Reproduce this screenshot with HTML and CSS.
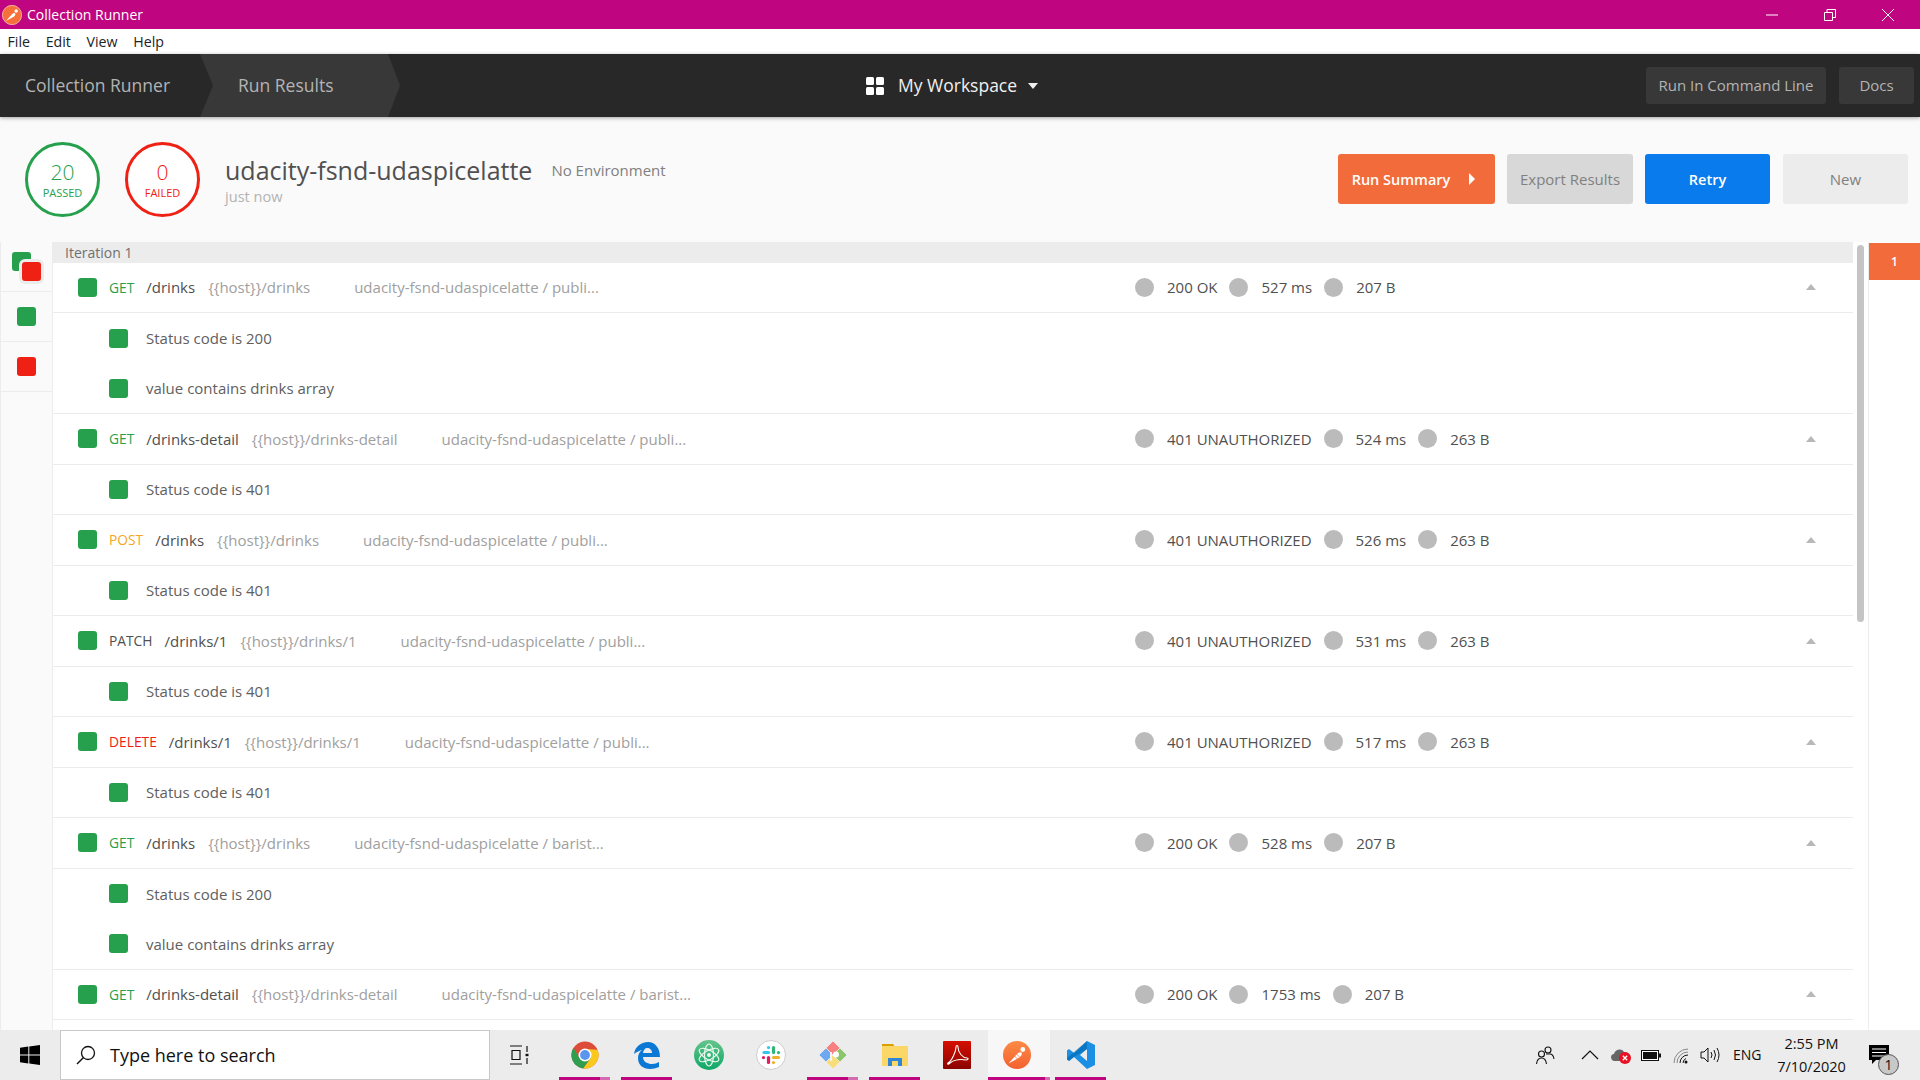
FILE: index.html
```html
<!DOCTYPE html>
<html lang="en">
<head>
<meta charset="utf-8">
<title>Collection Runner</title>
<link rel="stylesheet" href="styles.css">
</head>
<body>
<div class="app">
  <div class="titlebar">
    <div class="title-left">
      <svg class="pm-small" viewBox="0 0 28 28"><circle cx="14" cy="14" r="13.500" fill="#f7703a" stroke="#ffd9c4"/><path d="M5.500 22.500L14 13Q16 10.500 18.500 11.500Q19.500 14 17 16Z" fill="#fff"/><circle cx="19.800" cy="8.500" r="2.400" fill="#fff"/></svg>
      <span>Collection Runner</span>
    </div>
    <div class="win-controls">
      <svg class="win-min" viewBox="0 0 12 12"><path d="M0 6H12" stroke="#fff"/></svg>
      <svg class="win-max" viewBox="0 0 12 12"><path d="M.5 3.5h8v8h-8zM3 3.5V.5h8.500v8H8.500" fill="none" stroke="#fff"/></svg>
      <svg class="win-close" viewBox="0 0 12 12"><path d="M0 0L12 12M12 0L0 12" stroke="#fff"/></svg>
    </div>
  </div>
  <div class="menubar"><span>File</span><span>Edit</span><span>View</span><span>Help</span></div>
  <header class="topbar">
    <div class="crumbs">
      <div class="crumb">Collection Runner</div>
      <div class="crumb crumb-active">Run Results</div>
    </div>
    <div class="workspace">
      <svg class="ws-icon" viewBox="0 0 18 18"><rect width="8" height="8" rx="1.500" fill="#fff"/><rect x="10" width="8" height="8" rx="1.500" fill="#fff"/><rect y="10" width="8" height="8" rx="1.500" fill="#fff"/><rect x="10" y="10" width="8" height="8" rx="1.500" fill="#fff"/></svg>
      <span class="ws-label">My Workspace</span>
      <i class="ws-caret"></i>
    </div>
    <div class="top-actions">
      <button class="dark-btn btn-cli">Run In Command Line</button>
      <button class="dark-btn btn-docs">Docs</button>
    </div>
  </header>
  <section class="summary">
    <div class="ring ring-pass"><b>20</b><small>PASSED</small></div>
    <div class="ring ring-fail"><b>0</b><small>FAILED</small></div>
    <div class="run-info">
      <div class="run-line"><span class="run-name">udacity-fsnd-udaspicelatte</span><span class="run-env">No Environment</span></div>
      <div class="run-time">just now</div>
    </div>
    <div class="run-actions">
      <button class="act act-summary">Run Summary<i class="act-caret"></i></button>
      <button class="act act-export">Export Results</button>
      <button class="act act-retry">Retry</button>
      <button class="act act-new">New</button>
    </div>
  </section>
  <main class="body">
    <aside class="filters">
      <div class="filter"><span class="stack"><i class="sq sq-g stack-g"></i><i class="sq sq-r stack-r"></i></span></div>
      <div class="filter"><i class="sq sq-g"></i></div>
      <div class="filter"><i class="sq sq-r"></i></div>
    </aside>
    <div class="results">
      <div class="iter">Iteration 1</div>

      <div class="row req"><i class="sq sq-g"></i><span class="m m-get">GET</span><span class="path">/drinks</span><span class="url">{{host}}/drinks</span><span class="coll">udacity-fsnd-udaspicelatte / publi...</span>
        <div class="meta"><i class="dot"></i><span>200 OK</span><i class="dot"></i><span>527 ms</span><i class="dot"></i><span>207 B</span></div><i class="up"></i></div>
      <div class="row sub"><i class="sq sq-g"></i><span>Status code is 200</span></div>
      <div class="row sub sub-end"><i class="sq sq-g"></i><span>value contains drinks array</span></div>

      <div class="row req"><i class="sq sq-g"></i><span class="m m-get">GET</span><span class="path">/drinks-detail</span><span class="url">{{host}}/drinks-detail</span><span class="coll">udacity-fsnd-udaspicelatte / publi...</span>
        <div class="meta"><i class="dot"></i><span>401 UNAUTHORIZED</span><i class="dot"></i><span>524 ms</span><i class="dot"></i><span>263 B</span></div><i class="up"></i></div>
      <div class="row sub sub-end"><i class="sq sq-g"></i><span>Status code is 401</span></div>

      <div class="row req"><i class="sq sq-g"></i><span class="m m-post">POST</span><span class="path">/drinks</span><span class="url">{{host}}/drinks</span><span class="coll">udacity-fsnd-udaspicelatte / publi...</span>
        <div class="meta"><i class="dot"></i><span>401 UNAUTHORIZED</span><i class="dot"></i><span>526 ms</span><i class="dot"></i><span>263 B</span></div><i class="up"></i></div>
      <div class="row sub sub-end"><i class="sq sq-g"></i><span>Status code is 401</span></div>

      <div class="row req"><i class="sq sq-g"></i><span class="m m-patch">PATCH</span><span class="path">/drinks/1</span><span class="url">{{host}}/drinks/1</span><span class="coll">udacity-fsnd-udaspicelatte / publi...</span>
        <div class="meta"><i class="dot"></i><span>401 UNAUTHORIZED</span><i class="dot"></i><span>531 ms</span><i class="dot"></i><span>263 B</span></div><i class="up"></i></div>
      <div class="row sub sub-end"><i class="sq sq-g"></i><span>Status code is 401</span></div>

      <div class="row req"><i class="sq sq-g"></i><span class="m m-delete">DELETE</span><span class="path">/drinks/1</span><span class="url">{{host}}/drinks/1</span><span class="coll">udacity-fsnd-udaspicelatte / publi...</span>
        <div class="meta"><i class="dot"></i><span>401 UNAUTHORIZED</span><i class="dot"></i><span>517 ms</span><i class="dot"></i><span>263 B</span></div><i class="up"></i></div>
      <div class="row sub sub-end"><i class="sq sq-g"></i><span>Status code is 401</span></div>

      <div class="row req"><i class="sq sq-g"></i><span class="m m-get">GET</span><span class="path">/drinks</span><span class="url">{{host}}/drinks</span><span class="coll">udacity-fsnd-udaspicelatte / barist...</span>
        <div class="meta"><i class="dot"></i><span>200 OK</span><i class="dot"></i><span>528 ms</span><i class="dot"></i><span>207 B</span></div><i class="up"></i></div>
      <div class="row sub"><i class="sq sq-g"></i><span>Status code is 200</span></div>
      <div class="row sub sub-end"><i class="sq sq-g"></i><span>value contains drinks array</span></div>

      <div class="row req"><i class="sq sq-g"></i><span class="m m-get">GET</span><span class="path">/drinks-detail</span><span class="url">{{host}}/drinks-detail</span><span class="coll">udacity-fsnd-udaspicelatte / barist...</span>
        <div class="meta"><i class="dot"></i><span>200 OK</span><i class="dot"></i><span>1753 ms</span><i class="dot"></i><span>207 B</span></div><i class="up"></i></div>
    </div>
    <div class="scroll"><div class="thumb"></div></div>
    <aside class="iters"><div class="iter-tab">1</div></aside>
  </main>
  <footer class="taskbar">
    <svg class="tb-win" viewBox="0 0 20 20"><path d="M0 2.800L8.300 1.600V9.500H0zM9.300 1.500L20 0V9.500H9.300zM0 10.500H8.300V18.400L0 17.200zM9.300 10.500H20V20L9.300 18.500z" fill="#000"/></svg>
    <div class="search">
      <svg class="search-ico" viewBox="0 0 20 20"><circle cx="12" cy="8" r="6.500" fill="none" stroke="#111" stroke-width="1.300"/><path d="M7.500 12.500L1 19" stroke="#111" stroke-width="1.500"/></svg>
      <span>Type here to search</span>
    </div>
    <svg class="taskview" viewBox="0 0 20 20"><path d="M1 1H13M1 19H13M3 5.500H11V14.500H3Z" fill="none" stroke="#111" stroke-width="1.200"/><path d="M18 1V7M18 13V19" stroke="#111" stroke-width="1.200"/><rect x="16.500" y="8.800" width="3" height="2.400" fill="#111"/></svg>
    <div class="apps">
      <div class="app-i on split"><svg viewBox="0 0 28 28"><circle cx="14" cy="14" r="13.500" fill="#dd4b39"/><path d="M26.500 8.800L14 8L19.500 17L12 27.400A13.500 13.500 0 0 0 26.500 8.800Z" fill="#fbc91d"/><path d="M2.500 6.800L8.500 17L19.500 17L12 27.400A13.500 13.500 0 0 1 2.500 6.800Z" fill="#2f9e4f"/><circle cx="14" cy="14" r="6.500" fill="#fff"/><circle cx="14" cy="14" r="4.900" fill="#5a95f0"/></svg></div>
      <div class="app-i on"><svg viewBox="0 0 28 28"><path fill-rule="evenodd" d="M1 13C2 5 9 1 15 1C22 1 27 7 27 16H10C10 21 15 23 19 23C22 23 24 22 26 21V26C23 27 20 28 17 28C10 28 5 24 5 17C5 14 6 11 9 9C6 10 3 11 1 13ZM10 12H19C19 9 17 7 14 7C12 7 10.500 9 10 12Z" fill="#0a78d4"/></svg></div>
      <div class="app-i app-lg"><svg viewBox="0 0 30 30"><defs><linearGradient id="atomg" x1="0" y1="0" x2="0" y2="1"><stop offset="0" stop-color="#66c48b"/><stop offset="1" stop-color="#0ca866"/></linearGradient></defs><circle cx="15" cy="15" r="15" fill="url(#atomg)"/><g fill="none" stroke="#e9f7ef" stroke-width="1.200"><ellipse cx="15" cy="15" rx="11" ry="4.500" transform="rotate(30 15 15)"/><ellipse cx="15" cy="15" rx="11" ry="4.500" transform="rotate(-30 15 15)"/><ellipse cx="15" cy="15" rx="11" ry="4.500" transform="rotate(90 15 15)"/></g><circle cx="15" cy="15" r="2" fill="#e9f7ef"/></svg></div>
      <div class="app-i app-lg"><svg viewBox="0 0 30 30"><circle cx="15" cy="15" r="14.500" fill="#fff" stroke="#ccc"/><g stroke-width="3.200" stroke-linecap="round" fill="none"><path d="M8 12.500H12.500" stroke="#36c5f0"/><path d="M12.500 7.500V7.600" stroke="#36c5f0"/><path d="M17.500 7.500V12.500" stroke="#2eb67d"/><path d="M22.500 12.500V12.600" stroke="#2eb67d"/><path d="M17.500 17.500H22.500" stroke="#ecb22e"/><path d="M17.500 22.500V22.600" stroke="#ecb22e"/><path d="M12.500 17.500V22.500" stroke="#e01e5a"/><path d="M7.500 17.500V17.600" stroke="#e01e5a"/></g></svg></div>
      <div class="app-i app-lg on split"><svg viewBox="0 0 30 30"><g stroke="#ececec" stroke-width=".8"><path d="M8 8L15 15L8 22L1 15Z" fill="#6ea8f0"/><path d="M15 15L22 22L15 29L8 22Z" fill="#f9dd7a"/><path d="M22 8L29 15L22 22L15 15Z" fill="#8bc66a"/><path d="M15 1L22 8L15 15L8 8Z" fill="#f98080"/></g><circle cx="18" cy="14.500" r="3" fill="#fff"/><path d="M13 12V21" stroke="#f4f4f4" stroke-width="2"/></svg></div>
      <div class="app-i on"><svg viewBox="0 0 28 24"><path d="M1 1H12L14 4H1Z" fill="#d9a000"/><path d="M1 3H27V23H1Z" fill="#fbd768"/><path d="M7 15H21V23H17V18H11V23H7Z" fill="#2f86d6"/></svg></div>
      <div class="app-i"><svg viewBox="0 0 28 28"><defs><linearGradient id="acrog" x1="0" y1="0" x2="0" y2="1"><stop offset="0" stop-color="#d50f00"/><stop offset="1" stop-color="#8a0400"/></linearGradient></defs><rect width="28" height="28" rx="1" fill="url(#acrog)"/><path d="M5 22C9 20 13 10 13 6C13 4 15 4 15 6C15 12 20 17 24 17C26 17 25 19 23 19C17 18 11 19 7 22C5 24 4 23 5 22Z" fill="none" stroke="#fff" stroke-width="1.100"/></svg></div>
      <div class="app-i on active"><svg viewBox="0 0 28 28"><defs><linearGradient id="pmg" x1="0" y1="0" x2="0" y2="1"><stop offset="0" stop-color="#fb8b46"/><stop offset="1" stop-color="#f4612e"/></linearGradient></defs><circle cx="14" cy="14" r="14" fill="url(#pmg)"/><path d="M5.500 22.500L14 13Q16 10.500 18.500 11.500Q19.500 14 17 16L12 19Z" fill="#fff"/><path d="M11.500 15L14.500 18M13.500 13L16.500 16" stroke="#f7703a" stroke-width=".8"/><circle cx="19.800" cy="8.500" r="2.400" fill="#fff"/></svg></div>
      <div class="app-i app-lg on"><svg viewBox="0 0 30 30"><path d="M21 1L29 5V25L21 29L8 17L3 21L1 19.500V10.500L3 9L8 13ZM21 9L14 15L21 21Z" fill="#1a8fe3"/><path d="M21 1V9L8 17L3 21L1 19.500V18L21 1Z" fill="#0065a9" fill-opacity=".55"/></svg></div>
    </div>
    <div class="tray">
      <svg class="t-people" viewBox="0 0 20 20"><g fill="none" stroke="#111" stroke-width="1.100"><circle cx="13" cy="5" r="3"/><circle cx="6.500" cy="9" r="3"/><path d="M1.500 19C2 15 4 13 6.500 13S11 15 11.500 19M11 9H15C17 9 18.500 11 19 14"/></g></svg>
      <svg class="t-chev" viewBox="0 0 18 10"><path d="M1 9L9 1L17 9" fill="none" stroke="#111" stroke-width="1.200"/></svg>
      <svg class="t-cloud" viewBox="0 0 22 18"><path d="M4 15C0 14 0 8 4 8C5 3 12 2 14 6C18 6 20 9 20 12V15Z" fill="#666"/><circle cx="15" cy="12" r="6" fill="#e81123"/><path d="M12.800 9.800L17.200 14.200M17.200 9.800L12.800 14.200" stroke="#fff" stroke-width="1.300"/></svg>
      <svg class="t-batt" viewBox="0 0 20 11"><rect x=".5" y=".5" width="17" height="10" fill="#fff" stroke="#111"/><rect x="2" y="2" width="14" height="7" fill="#111"/><rect x="18" y="3.500" width="2" height="4" fill="#111"/></svg>
      <svg class="t-wifi" viewBox="0 0 16 16"><g fill="none" stroke="#888" stroke-width="1"><path d="M1 15A14 14 0 0 1 15 1"/><path d="M4 15A11 11 0 0 1 15 4"/></g><path d="M7 15A8 8 0 0 1 15 7" fill="none" stroke="#111"/><path d="M10 15A5 5 0 0 1 13 10.500" fill="none" stroke="#111"/><circle cx="13" cy="14" r="1.500" fill="#111"/></svg>
      <svg class="t-vol" viewBox="0 0 20 16"><path d="M1 5H4L8 1V15L4 11H1Z" fill="none" stroke="#111"/><path d="M11 5Q13 8 11 11M14 3Q17 8 14 13M17 1Q21 8 17 15" fill="none" stroke="#111"/></svg>
      <span class="t-lang">ENG</span>
      <div class="clock"><span>2:55 PM</span><span>7/10/2020</span></div>
      <div class="notif">
        <svg class="notif-ico" viewBox="0 0 20 19"><path d="M0 0H20V15H7L3 19V15H0Z" fill="#000"/><path d="M3 4H17M3 7.500H17M3 11H17" stroke="#fff"/></svg>
        <span class="badge">1</span>
      </div>
    </div>
  </footer>
</div>
</body>
</html>
```
FILE: styles.css
```css
* { box-sizing: border-box; }
html, body { margin: 0; height: 100%; overflow: hidden; }
body { font-family: "Open Sans", "Noto Sans", sans-serif; color: #505050; background: #fff; }
i { display: block; font-style: normal; }
button { font-family: inherit; border: 0; padding: 0; }

.app { width: 1920px; height: 1080px; display: flex; flex-direction: column; }

/* title bar */
.titlebar { height: 29px; flex: none; background: #bf0680; color: #fff; display: flex; justify-content: space-between; align-items: center; font-size: 14px; }
.title-left { display: flex; align-items: center; padding-left: 2px; gap: 5px; }
.pm-small { width: 20px; height: 20px; }
.win-controls { display: flex; align-items: center; padding-right: 26px; gap: 46px; }
.win-min, .win-max, .win-close { width: 12px; height: 12px; }

/* menu */
.menubar { height: 25px; flex: none; background: #fff; color: #222; font-size: 14.200px; display: flex; align-items: center; padding-left: 7.500px; gap: 15.700px; }

/* dark top bar */
.topbar { height: 63px; flex: none; background: #282828; display: flex; align-items: center; position: relative; z-index: 2; box-shadow: 0 1px 4px rgba(0,0,0,.35); }
.crumbs { display: flex; height: 100%; width: 400px; flex: none; }
.crumb { font-size: 17.500px; color: #b3b3b3; display: flex; align-items: center; padding: 0 0 2px 25px; width: 200px; flex: none; }
.crumb-active { background: #383838; width: 200px; padding-left: 38px; clip-path: polygon(0 0, 188px 0, 200px 50%, 188px 100%, 0 100%, 13px 50%); }
.workspace { position: absolute; left: 866px; top: 0; height: 100%; display: flex; align-items: center; color: #f0f0f0; font-size: 17.500px; }
.ws-icon { width: 18px; height: 18px; margin-right: 14px; }
.ws-label { padding-bottom: 2px; }
.ws-caret { margin-left: 11px; border-left: 5.500px solid transparent; border-right: 5.500px solid transparent; border-top: 6px solid #f0f0f0; }
.top-actions { margin-left: auto; display: flex; gap: 13px; padding-right: 6px; }
.dark-btn { height: 37px; background: #383838; color: #b3b3b3; font-size: 15px; border-radius: 3px; padding-bottom: 2px; }
.btn-cli { width: 180px; }
.btn-docs { width: 75px; }

/* summary */
.summary { height: 125px; flex: none; background: #fafafa; display: flex; align-items: center; padding: 0 12px 0 25px; }
.ring { width: 75px; height: 75px; border-radius: 50%; border: 3px solid; background: #fff; display: flex; flex-direction: column; align-items: center; justify-content: center; flex: none; }
.ring b { font-weight: 300; font-size: 21px; line-height: 25px; }
.ring small { font-size: 11px; line-height: 14px; margin-top: 1px; }
.ring-pass { border-color: #26a04d; color: #26a04d; margin-right: 25px; }
.ring-fail { border-color: #ef2114; color: #ef2114; margin-right: 25px; }
.run-info { display: flex; flex-direction: column; }
.run-line { display: flex; align-items: center; gap: 19px; }
.run-name { font-size: 25px; line-height: 34px; color: #505050; }
.run-env { font-size: 15px; color: #808080; }
.run-time { font-size: 14.600px; line-height: 20px; color: #b3b3b3; margin-top: -1px; }
.run-actions { margin-left: auto; display: flex; gap: 12px; margin-top: -1px; }
.act { height: 50px; width: 125px; border-radius: 3px; font-size: 15px; display: flex; align-items: center; justify-content: center; }
.act-summary { width: 157px; background: #f26b3a; color: #fff; font-weight: 600; font-size: 14.500px; gap: 19px; padding-right: 6px; }
.act-caret { border-top: 6px solid transparent; border-bottom: 6px solid transparent; border-left: 6px solid #fff; }
.act-export { width: 126px; background: #d8d8d8; color: #808080; }
.act-retry { background: #097bed; color: #fff; font-weight: 600; font-size: 14.500px; margin-right: 1px; }
.act-new { background: #ececec; color: #808080; }

/* body */
.body { flex: 1; min-height: 0; display: flex; background: #fff; overflow: hidden; }
.filters { width: 53px; flex: none; background: #fafafa; border-left: 1px solid #ececec; border-right: 1px solid #ececec; padding-top: 0; }
.filter { height: 50px; border-bottom: 1px solid #ececec; display: flex; align-items: center; justify-content: center; }
.sq { width: 19px; height: 19px; border-radius: 3px; flex: none; }
.sq-g { background: #26a04d; }
.sq-r { background: #ef2114; }
.stack { position: relative; width: 30px; height: 30px; }
.stack-g { position: absolute; left: 0; top: 0; }
.stack-r { position: absolute; left: 10px; top: 10px; box-shadow: 0 0 0 3px #ececec; }

.results { width: 1800px; flex: none; overflow: hidden; }
.iter { height: 20.600px; background: #ececec; font-size: 14px; color: #707070; line-height: 21px; padding-left: 12px; }
.row { height: 50.500px; display: flex; align-items: center; font-size: 15px; }
.req { padding-left: 25px; border-bottom: 1px solid #ececec; }
.sub { padding-left: 56px; color: #606060; }
.sub .sq { margin-right: 18px; }
.sub-end { border-bottom: 1px solid #ececec; }
.m { margin-left: 12px; margin-right: 12px; font-size: 13.800px; }
.m-get { color: #26a04d; }
.m-post { color: #f5a623; }
.m-patch { color: #505050; }
.m-delete { color: #ef2114; }
.path { margin-right: 13px; color: #505050; }
.url { color: #a0a0a0; margin-right: 44px; }
.coll { color: #a0a0a0; }
.meta { position: absolute; left: 1135px; display: flex; align-items: center; gap: 12px; color: #505050; }
.meta span { margin-left: 1px; }
.dot { width: 19px; height: 19px; border-radius: 50%; background: #bbb; }
.up { position: absolute; left: 1806px; border-left: 5.500px solid transparent; border-right: 5.500px solid transparent; border-bottom: 6px solid #b8b8b8; }

.scroll { width: 16px; flex: none; padding: 3px 4px; border-right: 1px solid #ececec; }
.thumb { width: 7px; height: 377px; border-radius: 4px; background: #c4c4c4; }
.iters { flex: 1; background: #fff; padding-top: 1px; }
.iter-tab { height: 37px; background: #f26b3a; color: #fff; font-size: 12px; display: flex; align-items: center; justify-content: center; font-weight: 600; }

/* taskbar */
.taskbar { height: 50px; flex: none; background: #ececec; display: flex; align-items: center; position: relative; z-index: 3; }
.tb-win { width: 20px; height: 20px; margin-left: 20px; margin-right: 20px; }
.search { width: 430px; height: 50px; background: #fff; border: 1px solid #c8c8c8; display: flex; align-items: center; padding-left: 15px; color: #111; font-size: 18px; gap: 14px; }
.search-ico { width: 20px; height: 20px; }
.taskview { width: 20px; height: 20px; margin-left: 19px; }
.apps { display: flex; margin-left: 30px; height: 100%; align-items: stretch; gap: 11px; }
.app-i { width: 51px; flex: none; display: flex; align-items: center; justify-content: center; position: relative; }
.app-i svg { width: 28px; height: 28px; }
.app-lg svg { width: 30px; height: 30px; }
.app-i.on::after { content: ""; position: absolute; left: 0; right: 0; bottom: 0; height: 3px; background: #bf0680; }
.app-i.split::after { background: linear-gradient(to right, #bf0680 80%, #d56bb1 80%); }
.active { background: #f7f7f7; width: 62px; margin: 0 -6px 0 -5px; padding-right: 4px; }
.app-i.active::after { background: linear-gradient(to right, #bf0680 92%, #d56bb1 92%); }
.tray { position: absolute; left: 0; top: 0; width: 100%; height: 100%; pointer-events: none; }
.tray > * { position: absolute; }
.t-people { left: 1535px; top: 15px; width: 20px; height: 20px; }
.t-chev { left: 1581px; top: 20px; width: 18px; height: 10px; }
.t-cloud { left: 1610px; top: 16px; width: 22px; height: 18px; }
.t-batt { left: 1641px; top: 20px; width: 20px; height: 11px; }
.t-wifi { left: 1673px; top: 18px; width: 16px; height: 16px; }
.t-vol { left: 1700px; top: 17px; width: 20px; height: 16px; }
.t-lang { left: 1733px; top: 15px; font-size: 14px; color: #111; line-height: 20px; }
.clock { left: 1771px; top: 2px; width: 81px; display: flex; flex-direction: column; align-items: center; font-size: 14.500px; color: #111; line-height: 23px; }
.notif { left: 1869px; top: 15px; width: 30px; height: 30px; }
.notif-ico { width: 20px; height: 19px; display: block; }
.badge { position: absolute; left: 9px; top: 9px; width: 21px; height: 21px; border-radius: 50%; background: #c8c8c8; border: 1px solid #555; color: #111; font-size: 14px; display: flex; align-items: center; justify-content: center; }
```
